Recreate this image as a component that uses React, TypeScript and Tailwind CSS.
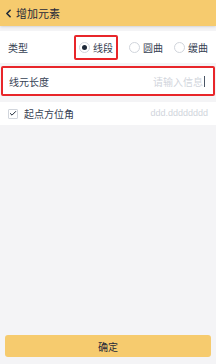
import { ChevronLeft, Check } from 'lucide-react'

const FONT = { fontFamily: '"Noto Sans CJK SC", "Noto Sans", sans-serif' }

function Radio({ label, checked }: { label: string; checked?: boolean }) {
  return (
    <div className="flex items-center gap-[3px]">
      <span className="w-[11px] h-[11px] rounded-full border border-gray-300 flex items-center justify-center bg-white">
        {checked && <span className="w-[5px] h-[5px] rounded-full bg-gray-800" />}
      </span>
      <span className="text-[10px] text-gray-700">{label}</span>
    </div>
  )
}

export default function App() {
  return (
    <div className="w-[216px] h-[364px] bg-[#f4f4f6] flex flex-col" style={FONT}>
      {/* Header */}
      <div className="h-[26px] bg-[#f6cb6e] flex items-center pl-[2px] shadow-sm">
        <ChevronLeft size={13} strokeWidth={3} className="text-gray-800" />
        <span className="text-[11px] text-gray-800 ml-[1px]">增加元素</span>
      </div>

      {/* Type row */}
      <div className="mt-[5px] h-[32px] bg-white flex items-center px-[8px]">
        <span className="text-[10px] text-gray-700">类型</span>
        <div className="ml-auto flex items-center gap-[11px]">
          <div className="border-2 border-[#e8262a] rounded-[2px] h-[25px] w-[44px] flex items-center justify-center">
            <Radio label="线段" checked />
          </div>
          <Radio label="圆曲" />
          <Radio label="缓曲" />
        </div>
      </div>

      {/* Length input */}
      <div className="mt-[3px] mx-[1px] h-[30px] bg-white border-2 border-[#e8262a] rounded-[2px] flex items-center pl-[6px] pr-[8px]">
        <span className="text-[10px] text-gray-700">线元长度</span>
        <span className="ml-auto text-[10px] text-gray-300">请输入信息</span>
        <span className="w-px h-[11px] bg-gray-600 ml-[1px]" />
      </div>

      {/* Start azimuth */}
      <div className="mt-[6px] h-[23px] bg-white flex items-center px-[8px]">
        <span className="w-[10px] h-[10px] border border-gray-300 rounded-[1px] flex items-center justify-center">
          <Check size={9} strokeWidth={3} className="text-gray-800" />
        </span>
        <span className="ml-[6px] text-[10px] text-gray-700">起点方位角</span>
        <span className="ml-auto text-[9px] text-gray-300" style={{ fontFamily: '"Liberation Sans", sans-serif' }}>
          ddd.dddddddd
        </span>
      </div>

      <div className="flex-1" />

      {/* Confirm */}
      <div className="px-[5px] pb-[7px]">
        <button className="w-full h-[22px] bg-[#f6cb6e] rounded-[3px] text-[10px] text-gray-800">确定</button>
      </div>
    </div>
  )
}
